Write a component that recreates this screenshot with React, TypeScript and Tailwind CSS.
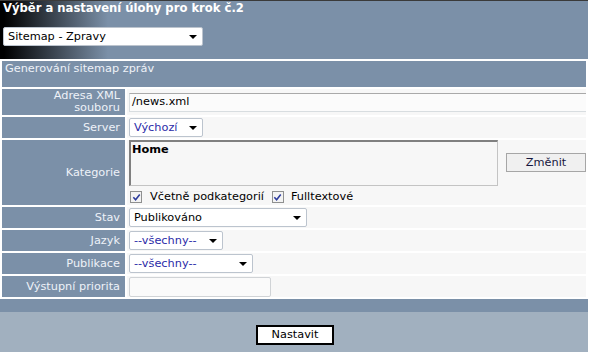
import React from "react";

function Arrow() {
  return (
    <span className="w-0 h-0 border-l-[4px] border-r-[4px] border-t-[4px] border-l-transparent border-r-transparent border-t-black" />
  );
}

function Select({ text, w, blue }: { text: string; w: string; blue?: boolean }) {
  return (
    <div
      className={`${w} h-[19px] flex items-center justify-between bg-white border border-[#bcc4ce] rounded-[2px] pl-[4px] pr-[5px] ${
        blue ? "text-[#2b2ba8]" : "text-black"
      }`}
    >
      <span className="leading-none">{text}</span>
      <Arrow />
    </div>
  );
}

function Check() {
  return (
    <span className="w-[12px] h-[12px] border border-[#8f9090] bg-[#f3f3f3] flex items-center justify-center">
      <svg viewBox="0 0 10 10" width="9" height="9">
        <path d="M1.5 4.8 L4 7.6 L8.6 1.6" stroke="#2b3a9c" strokeWidth="1.7" fill="none" />
      </svg>
    </span>
  );
}

function Label({ children }: { children: React.ReactNode }) {
  return (
    <div className="bg-[#7b90a8] text-[#eef2f8] flex items-center justify-end text-right pr-[5px] leading-[12px]">
      {children}
    </div>
  );
}

function Value({ children, className = "" }: { children?: React.ReactNode; className?: string }) {
  return <div className={`bg-[#f7f7f7] pl-[2px] flex items-center ${className}`}>{children}</div>;
}

export default function App() {
  return (
    <div className="w-[588px] h-[352px] flex flex-col font-['DejaVu_Sans',_Verdana,_sans-serif] text-[11.3px] text-black">
      <div className="h-[59px] border-t border-[#3a3a3a] bg-[linear-gradient(90deg,#000_4px,#7b90a8_108px)] pl-[3px] pt-[1px]">
        <div className="text-white font-bold text-[11.6px] leading-[13px]">Výběr a nastavení úlohy pro krok č.2</div>
        <div className="mt-[12px]">
          <Select text="Sitemap - Zpravy" w="w-[200px]" />
        </div>
      </div>
      <div className="flex flex-1">
        <div className="w-[1px] bg-[#404040]" />
        <div className="flex-1 flex flex-col">
          <div className="bg-white p-[2px] grid grid-cols-[123px_1fr] grid-rows-[26px_26px_21px_65px_21px_21px_21px_21px] gap-[2px]">
            <div className="col-span-2 bg-[#7b90a8] text-[#eef2f8] pl-[3px] pt-[1px] leading-[13px]">
              Generování sitemap zpráv
            </div>

            <Label>
              Adresa XML
              <br />
              souboru
            </Label>
            <Value className="overflow-hidden">
              <div className="w-[480px] h-[19px] shrink-0 bg-[#fbfbfb] border border-[#d8dde0] border-t-[#a9a9a9] pl-[2px] flex items-center">
                /news.xml
              </div>
            </Value>

            <Label>Server</Label>
            <Value>
              <Select text="Výchozí" w="w-[74px]" blue />
            </Value>

            <Label>Kategorie</Label>
            <Value className="items-start">
              <div className="flex flex-col">
                <div className="w-[369px] h-[46px] bg-[#f7f7f7] border-t-2 border-l-2 border-[#808080] border-r border-b border-r-[#c4c4c4] border-b-[#c4c4c4] pl-[1px] pt-[1px] font-bold leading-[13px]">
                  Home
                </div>
                <div className="flex items-center h-[14px] mt-[4px] pl-[1px]">
                  <Check />
                  <span className="ml-[8px]">Včetně podkategorií</span>
                  <span className="ml-[8px]">
                    <Check />
                  </span>
                  <span className="ml-[7px]">Fulltextové</span>
                </div>
              </div>
              <button className="ml-[8px] mt-[13px] w-[80px] h-[19px] bg-[#f0f0f0] border border-[#a6a6a6] text-[#16163e] text-[11.3px] leading-none flex items-center justify-center">
                Změnit
              </button>
            </Value>

            <Label>Stav</Label>
            <Value>
              <Select text="Publikováno" w="w-[178px]" />
            </Value>

            <Label>Jazyk</Label>
            <Value>
              <Select text="--všechny--" w="w-[94px]" blue />
            </Value>

            <Label>Publikace</Label>
            <Value>
              <Select text="--všechny--" w="w-[124px]" blue />
            </Value>

            <Label>Výstupní priorita</Label>
            <Value>
              <div className="w-[142px] h-[20px] bg-[#fafafa] border border-[#d0d3d6] rounded-[2px]" />
            </Value>
          </div>
          <div className="h-[13px] bg-[#7b90a8]" />
          <div className="flex-1 bg-[#a1b0bf] flex justify-center pt-[13px]">
            <button className="ml-[2px] w-[78px] h-[20px] bg-white border-2 border-black text-black text-[11.3px] leading-none flex items-center justify-center">
              Nastavit
            </button>
          </div>
        </div>
      </div>
    </div>
  );
}
